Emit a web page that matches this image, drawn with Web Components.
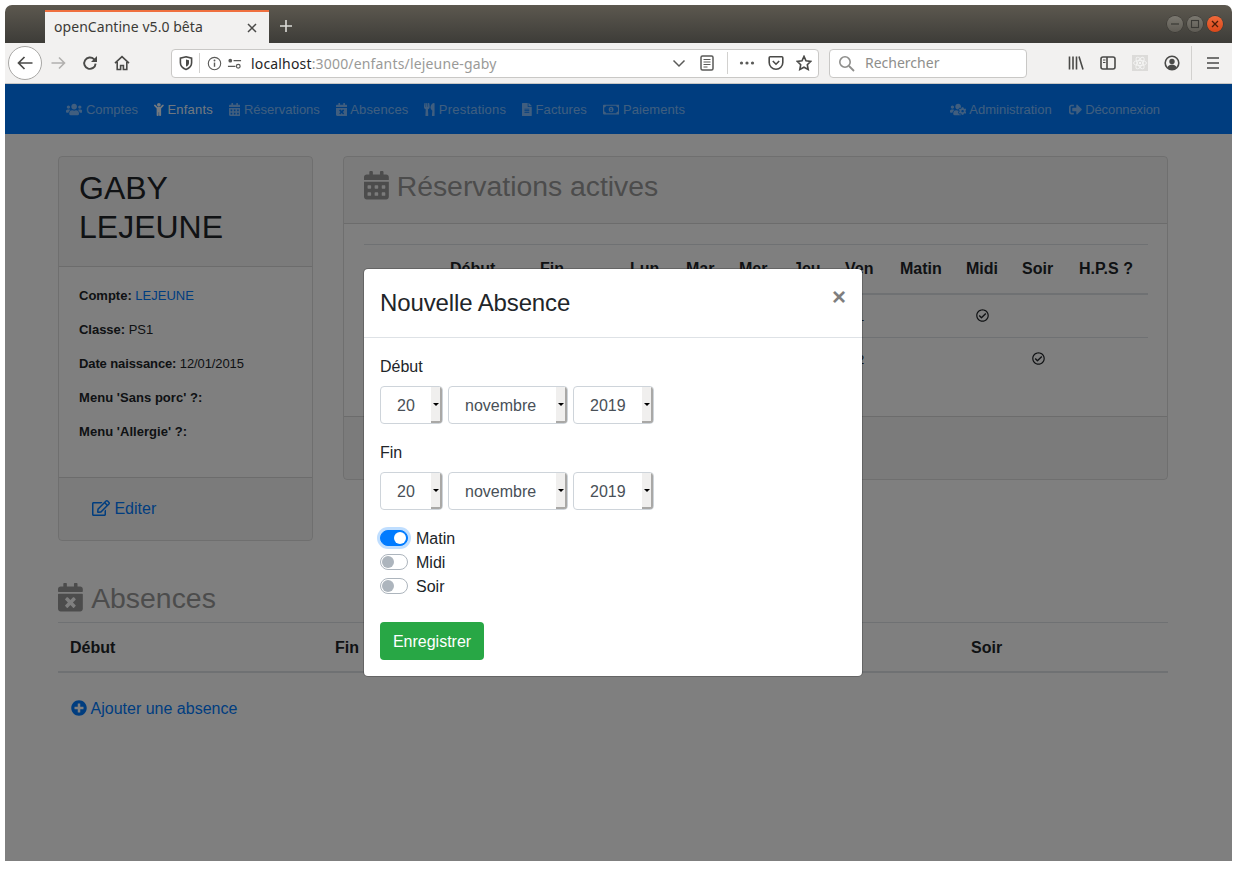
<!DOCTYPE html>
<html lang="fr">
<head>
<meta charset="utf-8">
<title>openCantine v5.0 bêta</title>
<style>
  html, body { margin: 0; background: #fff; }
  body { font-family: "Liberation Sans", Arial, sans-serif; font-size: 16px; color: #212529; }
</style>
</head>
<body>
<browser-window>
  <cantine-page></cantine-page>
</browser-window>

<script>
const ICONS = {
  users: [640, 'M96 224c35.3 0 64-28.7 64-64s-28.7-64-64-64-64 28.7-64 64 28.7 64 64 64zm448 0c35.3 0 64-28.7 64-64s-28.7-64-64-64-64 28.7-64 64 28.7 64 64 64zm32 32h-64c-17.6 0-33.5 7.1-45.1 18.6 40.3 22.1 68.9 62 75.1 109.4h66c17.7 0 32-14.3 32-32v-32c0-35.3-28.7-64-64-64zm-256 0c61.9 0 112-50.1 112-112S381.9 32 320 32 208 82.1 208 144s50.1 112 112 112zm76.8 32h-8.3c-20.8 10-43.9 16-68.5 16s-47.6-6-68.5-16h-8.3C179.6 288 128 339.6 128 403.2V432c0 26.5 21.5 48 48 48h288c26.5 0 48-21.5 48-48v-28.8c0-63.6-51.6-115.2-115.2-115.2zm-223.7-13.4C161.5 263.1 145.6 256 128 256H64c-35.3 0-64 28.7-64 64v32c0 17.7 14.3 32 32 32h65.9c6.3-47.4 34.9-87.3 75.2-109.4z'],
  child: [384, 'M120 72c0-39.765 32.235-72 72-72s72 32.235 72 72c0 39.764-32.235 72-72 72s-72-32.236-72-72zm254.627 1.373c-12.496-12.497-32.758-12.497-45.254 0L242.745 160H141.254L54.627 73.373c-12.496-12.497-32.758-12.497-45.254 0-12.497 12.497-12.497 32.758 0 45.255L104 213.254V480c0 17.673 14.327 32 32 32h16c17.673 0 32-14.327 32-32V368h16v112c0 17.673 14.327 32 32 32h16c17.673 0 32-14.327 32-32V213.254l94.627-94.627c12.497-12.497 12.497-32.757 0-45.254z'],
  calendar: [448, 'M0 464c0 26.5 21.5 48 48 48h352c26.5 0 48-21.5 48-48V192H0v272zm320-196c0-6.6 5.4-12 12-12h40c6.6 0 12 5.4 12 12v40c0 6.6-5.4 12-12 12h-40c-6.6 0-12-5.4-12-12v-40zm0 128c0-6.6 5.4-12 12-12h40c6.6 0 12 5.4 12 12v40c0 6.6-5.4 12-12 12h-40c-6.6 0-12-5.4-12-12v-40zM192 268c0-6.6 5.4-12 12-12h40c6.6 0 12 5.4 12 12v40c0 6.6-5.4 12-12 12h-40c-6.6 0-12-5.4-12-12v-40zm0 128c0-6.6 5.4-12 12-12h40c6.6 0 12 5.4 12 12v40c0 6.6-5.4 12-12 12h-40c-6.6 0-12-5.4-12-12v-40zM64 268c0-6.6 5.4-12 12-12h40c6.6 0 12 5.4 12 12v40c0 6.6-5.4 12-12 12H76c-6.6 0-12-5.4-12-12v-40zm0 128c0-6.6 5.4-12 12-12h40c6.6 0 12 5.4 12 12v40c0 6.6-5.4 12-12 12H76c-6.6 0-12-5.4-12-12v-40zM400 64h-48V16c0-8.8-7.2-16-16-16h-32c-8.8 0-16 7.2-16 16v48H160V16c0-8.8-7.2-16-16-16h-32c-8.8 0-16 7.2-16 16v48H48C21.5 64 0 85.5 0 112v48h448v-48c0-26.5-21.5-48-48-48z'],
  times: [448, 'M436 160H12c-6.6 0-12-5.4-12-12v-36c0-26.5 21.5-48 48-48h48V12c0-6.6 5.4-12 12-12h40c6.6 0 12 5.4 12 12v52h128V12c0-6.6 5.4-12 12-12h40c6.6 0 12 5.4 12 12v52h48c26.5 0 48 21.5 48 48v36c0 6.6-5.4 12-12 12zM12 192h424c6.6 0 12 5.4 12 12v260c0 26.5-21.5 48-48 48H48c-26.5 0-48-21.5-48-48V204c0-6.6 5.4-12 12-12zm257.3 160l48.1-48.1c4.7-4.7 4.7-12.3 0-17l-28.3-28.3c-4.7-4.7-12.3-4.7-17 0L224 306.7l-48.1-48.1c-4.7-4.7-12.3-4.7-17 0l-28.3 28.3c-4.7 4.7-4.7 12.3 0 17l48.1 48.1-48.1 48.1c-4.7 4.7-4.7 12.3 0 17l28.3 28.3c4.7 4.7 12.3 4.7 17 0l48.1-48.1 48.1 48.1c4.7 4.7 12.3 4.7 17 0l28.3-28.3c4.7-4.7 4.7-12.3 0-17L269.3 352z'],
  utensils: [416, 'M207.9 15.2c.8 4.7 16.1 94.5 16.1 128.8 0 52.3-27.8 89.6-68.9 104.6L168 486.7c.7 13.7-10.2 25.3-24 25.3H80c-13.7 0-24.7-11.5-24-25.3l12.9-238.1C27.7 233.6 0 196.2 0 144 0 109.6 15.3 19.9 16.1 15.2 19.3-5.1 61.4-5.4 64 16.3v141.2c1.3 3.4 15.1 3.2 16 0 1.4-25.3 7.9-139.2 8-141.8 3.3-20.8 44.7-20.8 47.9 0 .2 2.7 6.6 116.5 8 141.8.9 3.2 14.8 3.4 16 0V16.3c2.6-21.6 44.8-21.4 48-1.1zm119.2 285.7l-15 185.1c-1.2 14 9.9 26 23.9 26h56c13.3 0 24-10.7 24-24V24c0-13.2-10.7-24-24-24-82.5 0-221.4 178.5-64.9 300.9z'],
  file: [384, 'M224 136V0H24C10.7 0 0 10.7 0 24v464c0 13.3 10.7 24 24 24h336c13.3 0 24-10.7 24-24V160H248c-13.2 0-24-10.8-24-24zm64 236c0 6.6-5.4 12-12 12H108c-6.6 0-12-5.4-12-12v-8c0-6.6 5.4-12 12-12h168c6.6 0 12 5.4 12 12v8zm0-64c0 6.6-5.4 12-12 12H108c-6.6 0-12-5.4-12-12v-8c0-6.6 5.4-12 12-12h168c6.6 0 12 5.4 12 12v8zm0-72v8c0 6.6-5.4 12-12 12H108c-6.6 0-12-5.4-12-12v-8c0-6.6 5.4-12 12-12h168c6.6 0 12 5.4 12 12zm96-114.1v6.1H256V0h6.1c6.4 0 12.5 2.5 17 7l97.9 98c4.5 4.5 7 10.6 7 16.9z'],
  money: [640, 'M320 144c-53.02 0-96 50.14-96 112 0 61.85 42.98 112 96 112 53 0 96-50.13 96-112 0-61.86-42.98-112-96-112zm40 168c0 4.42-3.58 8-8 8h-64c-4.42 0-8-3.58-8-8v-16c0-4.42 3.58-8 8-8h16v-55.44l-.47.31a7.992 7.992 0 0 1-11.09-2.22l-8.88-13.31a7.992 7.992 0 0 1 2.22-11.09l15.33-10.22a23.99 23.99 0 0 1 13.31-4.03H328c4.42 0 8 3.58 8 8v88h16c4.42 0 8 3.58 8 8v16zM608 64H32C14.33 64 0 78.33 0 96v320c0 17.67 14.33 32 32 32h576c17.67 0 32-14.33 32-32V96c0-17.67-14.33-32-32-32zm-16 272c-35.35 0-64 28.65-64 64H112c0-35.35-28.65-64-64-64V176c35.35 0 64-28.65 64-64h416c0 35.35 28.65 64 64 64v160z'],
  userscog: [640, 'M610.5 341.3c2.6-14.1 2.6-28.5 0-42.6l25.8-14.9c3-1.7 4.3-5.2 3.3-8.5-6.7-21.6-18.2-41.2-33.2-57.4-2.3-2.5-6-3.1-9-1.4l-25.8 14.9c-10.9-9.3-23.4-16.5-36.9-21.3v-29.8c0-3.4-2.4-6.4-5.7-7.1-22.3-5-45-4.8-66.2 0-3.3.7-5.7 3.7-5.7 7.1v29.8c-13.5 4.8-26 12-36.9 21.3l-25.8-14.9c-2.9-1.7-6.7-1.1-9 1.4-15 16.2-26.5 35.8-33.2 57.4-1 3.3.4 6.8 3.3 8.5l25.8 14.9c-2.6 14.1-2.6 28.5 0 42.6l-25.8 14.9c-3 1.7-4.3 5.2-3.3 8.5 6.7 21.6 18.2 41.1 33.2 57.4 2.3 2.5 6 3.1 9 1.4l25.8-14.9c10.9 9.3 23.4 16.5 36.9 21.3v29.8c0 3.4 2.4 6.4 5.7 7.1 22.3 5 45 4.8 66.2 0 3.3-.7 5.7-3.7 5.7-7.1v-29.8c13.5-4.8 26-12 36.9-21.3l25.8 14.9c2.9 1.7 6.7 1.1 9-1.4 15-16.2 26.5-35.8 33.2-57.4 1-3.3-.4-6.8-3.3-8.5l-25.8-14.9zM496 368.5c-26.8 0-48.5-21.8-48.5-48.5s21.8-48.5 48.5-48.5 48.5 21.8 48.5 48.5-21.7 48.5-48.5 48.5zM96 224c35.3 0 64-28.7 64-64s-28.7-64-64-64-64 28.7-64 64 28.7 64 64 64zm224 32c1.9 0 3.7-.5 5.6-.6 8.3-21.7 20.5-42.1 36.3-59.2 7.4-8 17.9-12.6 28.9-12.6 6.9 0 13.7 1.8 19.6 5.3l7.9 4.6c.8-.5 1.6-.9 2.4-1.4 7-14.6 11.2-30.8 11.2-48 0-61.9-50.1-112-112-112S208 82.1 208 144c0 61.9 50.1 112 112 112zm105.2 194.5c-2.3-1.2-4.6-2.6-6.8-3.9-8.2 4.8-15.3 9.8-27.5 9.8-10.9 0-21.4-4.6-28.9-12.6-18.3-19.8-32.3-43.9-40.2-69.6-10.7-34.5 24.9-49.7 25.8-50.3-.1-2.6-.1-5.2 0-7.8l-7.9-4.6c-3.8-2.2-7-5-9.8-8.1-3.3.2-6.5.6-9.8.6-24.6 0-47.6-6-68.5-16h-8.3C179.6 288 128 339.6 128 403.2V432c0 26.5 21.5 48 48 48h255.4c-3.7-6-6.2-12.8-6.2-20.3v-9.2zM173.1 274.6C161.5 263.1 145.6 256 128 256H64c-35.3 0-64 28.7-64 64v32c0 17.7 14.3 32 32 32h65.9c6.3-47.4 34.9-87.3 75.2-109.4z'],
  signout: [512, 'M497 273L329 441c-15 15-41 4.5-41-17v-96H152c-13.3 0-24-10.7-24-24v-96c0-13.3 10.7-24 24-24h136V88c0-21.4 25.9-32 41-17l168 168c9.3 9.4 9.3 24.6 0 34zM192 436v-40c0-6.6-5.4-12-12-12H96c-17.7 0-32-14.3-32-32V160c0-17.7 14.3-32 32-32h84c6.6 0 12-5.4 12-12V76c0-6.6-5.4-12-12-12H96c-53 0-96 43-96 96v192c0 53 43 96 96 96h84c6.6 0 12-5.4 12-12z'],
  edit: [576, 'M402.3 344.9l32-32c5-5 13.7-1.5 13.7 5.7V464c0 26.5-21.5 48-48 48H48c-26.5 0-48-21.5-48-48V112c0-26.5 21.5-48 48-48h273.5c7.1 0 10.7 8.6 5.7 13.7l-32 32c-1.5 1.5-3.5 2.3-5.7 2.3H48v352h352V350.5c0-2.1.8-4.1 2.3-5.6zm156.6-201.8L296.3 405.7l-90.4 10c-26.2 2.9-48.5-19.2-45.6-45.6l10-90.4L432.9 17.1c22.9-22.9 59.9-22.9 82.7 0l43.2 43.2c22.9 22.9 22.9 60 .1 82.8zM460.1 174L402 115.9 216.2 301.8l-7.3 65.3 65.3-7.3L460.1 174zm64.8-79.7l-43.2-43.2c-4.1-4.1-10.8-4.1-14.8 0L436 82l58.1 58.1 30.9-30.9c4-4.2 4-10.8-.1-14.9z'],
  plus: [512, 'M256 8C119 8 8 119 8 256s111 248 248 248 248-111 248-248S393 8 256 8zm144 276c0 6.6-5.4 12-12 12h-92v92c0 6.6-5.4 12-12 12h-56c-6.6 0-12-5.4-12-12v-92h-92c-6.6 0-12-5.4-12-12v-56c0-6.6 5.4-12 12-12h92v-92c0-6.6 5.4-12 12-12h56c6.6 0 12 5.4 12 12v92h92c6.6 0 12 5.4 12 12v56z'],
  check: [512, 'M256 8C119.033 8 8 119.033 8 256s111.033 248 248 248 248-111.033 248-248S392.967 8 256 8zm0 48c110.532 0 200 89.451 200 200 0 110.532-89.451 200-200 200-110.532 0-200-89.451-200-200 0-110.532 89.451-200 200-200m140.204 130.267l-22.536-22.718c-4.667-4.705-12.265-4.736-16.97-.068L215.346 303.697l-59.792-60.277c-4.667-4.705-12.265-4.736-16.97-.069l-22.719 22.536c-4.705 4.667-4.736 12.265-.068 16.971l90.781 91.516c4.667 4.705 12.265 4.736 16.97.068l172.589-171.204c4.704-4.668 4.734-12.266.067-16.971z']
};

class FaIcon extends HTMLElement {
  connectedCallback() {
    const [w, d] = ICONS[this.getAttribute('name')];
    this.attachShadow({ mode: 'open' }).innerHTML = `
      <style>
        :host { display: inline-block; height: 1em; line-height: 0; vertical-align: -.125em; }
        svg { height: 1em; width: auto; display: block; fill: currentColor; }
      </style>
      <svg viewBox="0 0 ${w} 512"><path d="${d}"/></svg>`;
  }
}
customElements.define('fa-icon', FaIcon);

// browser chrome around the page
class BrowserWindow extends HTMLElement {
  constructor() {
    super();
    const stroke = 'fill="none" stroke="#4a4a48" stroke-width="1.6"';
    this.attachShadow({ mode: 'open' }).innerHTML = `
      <style>
        :host { display: flex; flex-direction: column; width: 1227px; height: 856px; margin: 5px 0 0 5px; font-family: "Noto Sans", sans-serif; }
        .titlebar { height: 38px; flex: none; display: flex; align-items: flex-end; padding-left: 40px; background: linear-gradient(#5c584f, #3d3c38); border-radius: 7px 7px 0 0; }
        .tab { width: 224px; height: 31px; box-sizing: content-box; border-top: 2px solid #f0703f; background: #f2f1f0; display: flex; align-items: center; color: #3c3b37; font-size: 14px; }
        .tab span { margin-left: 9px; margin-top: -2px; flex: 1; letter-spacing: .05px; }
        .tab svg { margin-right: 11px; }
        .plus { align-self: center; margin-left: 9px; margin-top: 4px; display: block; }
        .winbtns { margin-left: auto; margin-right: 9px; align-self: center; display: flex; gap: 4px; }
        .winbtns i { width: 16px; height: 16px; border-radius: 50%; display: flex; align-items: center; justify-content: center; background: linear-gradient(#7b7870, #5e5b54); box-shadow: 0 0 0 .5px #34332f; }
        .winbtns i.close { background: linear-gradient(#f0693a, #d9481a); }
        .toolbar { height: 40px; flex: none; display: flex; align-items: center; background: #f2f1f0; border-bottom: 1px solid #c8c7c5; }
        .back { box-sizing: border-box; width: 34px; height: 34px; margin-left: 3px; border: 1px solid #a8a7a5; border-radius: 50%; background: #fff; display: flex; align-items: center; justify-content: center; flex: none; }
        .ic { flex: none; display: block; }
        .url { width: 646px; height: 27px; margin-left: 41px; flex: none; border: 1px solid #c9c8c6; border-radius: 4px; background: #fff; display: flex; align-items: center; font-size: 14px; color: #9a9a98; }
        .url b { font-weight: 400; color: #252525; }
        .sep { width: 1px; height: 20px; background: #d2d1cf; flex: none; }
        .addr { flex: none; width: 421px; margin-left: 9px; white-space: nowrap; letter-spacing: .17px; }
        .search { width: 196px; height: 27px; margin-left: 10px; flex: none; border: 1px solid #c9c8c6; border-radius: 4px; background: #fff; display: flex; align-items: center; font-size: 14px; color: #8e8e8c; }
        .search span { margin-left: 10px; margin-top: -2px; }
        .content { flex: 1; position: relative; overflow: hidden; background: #fff; }
      </style>
      <div class="titlebar">
        <div class="tab"><span>openCantine v5.0 bêta</span>
          <svg class="ic" width="12" height="12" viewBox="0 0 12 12"><path d="M2 2l8 8M10 2l-8 8" stroke="#4a4a48" stroke-width="1.5" fill="none"/></svg>
        </div>
        <svg class="plus" width="16" height="16" viewBox="0 0 16 16"><path d="M8 2v12M2 8h12" stroke="#dcdbd7" stroke-width="1.6"/></svg>
        <div class="winbtns">
          <i><svg width="10" height="10" viewBox="0 0 10 10"><path d="M1 5h8" stroke="#3a3935" stroke-width="1.2"/></svg></i>
          <i><svg width="10" height="10" viewBox="0 0 10 10"><rect x="1.5" y="1.5" width="7" height="7" fill="none" stroke="#3a3935" stroke-width="1.1"/></svg></i>
          <i class="close"><svg width="10" height="10" viewBox="0 0 10 10"><path d="M2 2l6 6M8 2l-6 6" stroke="#4a1c08" stroke-width="1.3"/></svg></i>
        </div>
      </div>
      <div class="toolbar">
        <div class="back"><svg width="18" height="18" viewBox="0 0 18 18"><path d="M16.5 9H2.5M8.5 3L2.5 9l6 6" fill="none" stroke="#4a4a48" stroke-width="1.7"/></svg></div>
        <svg class="ic" style="margin-left:8px" width="16" height="16" viewBox="0 0 16 16"><path d="M14.5 8H1.5M9 2.5L14.5 8 9 13.5" fill="none" stroke="#b1b0ae" stroke-width="1.6"/></svg>
        <svg class="ic" style="margin-left:16px" width="16" height="16" viewBox="0 0 16 16"><path d="M13.6 8.6A5.7 5.7 0 1 1 12 4.200L14 6" fill="none" stroke="#4a4a48" stroke-width="1.900"/><path d="M15 1v6H9z" fill="#4a4a48"/></svg>
        <svg class="ic" style="margin-left:16px" width="16" height="16" viewBox="0 0 16 16"><path d="M1 8.2L8 1.6l7 6.6M3.2 7v7.5h3.4v-4h2.8v4h3.4V7" ${stroke}/></svg>
        <div class="url">
          <svg class="ic" style="margin-left:6px" width="16" height="16" viewBox="0 0 16 16"><path d="M8 1.800l5.600 1.400v4.600c0 3.400-2.600 5.600-5.600 6.600-3-1-5.600-3.200-5.600-6.600V3.200z" ${stroke}/><path d="M8 4.500l3 .8v2.600C11 9.800 9.600 11 8 11.600z" fill="#4a4a48"/></svg>
          <span class="sep" style="margin-left:5px"></span>
          <svg class="ic" style="margin-left:7px" width="15" height="15" viewBox="0 0 16 16"><circle cx="8" cy="8" r="6.600" fill="none" stroke="#5a5a58" stroke-width="1.200"/><path d="M8 7v4.500" stroke="#5a5a58" stroke-width="1.500"/><circle cx="8" cy="4.800" r="1" fill="#5a5a58"/></svg>
          <svg class="ic" style="margin-left:5px" width="15" height="15" viewBox="0 0 16 16"><path d="M7 5h8M1 11h8" stroke="#5a5a58" stroke-width="1.400"/><circle cx="3.500" cy="5" r="2" fill="#5a5a58"/><circle cx="12" cy="11" r="2" fill="none" stroke="#5a5a58" stroke-width="1.300"/></svg>
          <span class="addr"><b>localhost</b>:3000/enfants/lejeune-gaby</span>
          <svg class="ic" width="14" height="14" viewBox="0 0 14 14"><path d="M1.500 4.500L7 10l5.500-5.500" fill="none" stroke="#5a5a58" stroke-width="1.500"/></svg>
          <svg class="ic" style="margin-left:14px" width="14" height="16" viewBox="0 0 14 16"><rect x="1" y="1" width="12" height="14" rx="1.500" fill="none" stroke="#5a5a58" stroke-width="1.500"/><path d="M3.500 4.500h7M3.500 7h7M3.500 9.500h7M3.500 12h4" stroke="#5a5a58"/></svg>
          <span class="sep" style="margin-left:13px;height:22px"></span>
          <svg class="ic" style="margin-left:11px" width="16" height="16" viewBox="0 0 16 16"><circle cx="2.500" cy="8" r="1.600" fill="#5a5a58"/><circle cx="8" cy="8" r="1.600" fill="#5a5a58"/><circle cx="13.500" cy="8" r="1.600" fill="#5a5a58"/></svg>
          <svg class="ic" style="margin-left:13px" width="16" height="16" viewBox="0 0 16 16"><path d="M2.200 1.800h11.600c.6 0 1 .4 1 1v4.600c0 3.800-3 6.800-6.800 6.800s-6.800-3-6.800-6.800V2.800c0-.6.400-1 1-1z" ${stroke}/><path d="M4.800 6L8 9.200 11.200 6" ${stroke}/></svg>
          <svg class="ic" style="margin-left:12px" width="16" height="16" viewBox="0 0 16 16"><path d="M8 1.400l2 4.400 4.800.6-3.500 3.300.9 4.800L8 12.200l-4.200 2.300.9-4.800L1.200 6.400 6 5.800z" ${stroke}/></svg>
        </div>
        <div class="search">
          <svg class="ic" style="margin-left:8px" width="17" height="17" viewBox="0 0 17 17"><circle cx="7" cy="7" r="5.200" fill="none" stroke="#8e8e8c" stroke-width="1.600"/><path d="M11 11l5 5" stroke="#8e8e8c" stroke-width="1.800"/></svg>
          <span>Rechercher</span>
        </div>
        <svg class="ic" style="margin-left:41px" width="16" height="16" viewBox="0 0 16 16"><path d="M1.500 1.500v13M5 1.500v13M8.500 1.500v13M11 1.500l4 13" ${stroke}/></svg>
        <svg class="ic" style="margin-left:16px" width="16" height="16" viewBox="0 0 16 16"><rect x="1" y="2" width="14" height="12" rx="2" ${stroke}/><path d="M7 2v12" ${stroke}/><path d="M3 5h2.500M3 7.500h2.500" stroke="#4a4a48"/></svg>
        <svg class="ic" style="margin-left:16px;background:#dcdbd9" width="16" height="16" viewBox="0 0 16 16"><g fill="none" stroke="#f5f5f4" stroke-width=".9"><ellipse cx="8" cy="8" rx="6.500" ry="2.600"/><ellipse cx="8" cy="8" rx="6.500" ry="2.600" transform="rotate(60 8 8)"/><ellipse cx="8" cy="8" rx="6.500" ry="2.600" transform="rotate(120 8 8)"/></g><circle cx="8" cy="8" r="1.200" fill="#f5f5f4"/></svg>
        <svg class="ic" style="margin-left:16px" width="16" height="16" viewBox="0 0 16 16"><circle cx="8" cy="8" r="6.800" ${stroke}/><circle cx="8" cy="6.400" r="2.700" fill="#4a4a48"/><path d="M3.400 12.400c1-2 2.700-2.800 4.600-2.800s3.600.8 4.600 2.800c-1.200 1.200-2.800 1.900-4.600 1.900s-3.400-.7-4.600-1.900z" fill="#4a4a48"/></svg>
        <span class="sep" style="margin-left:11px;height:34px"></span>
        <svg class="ic" style="margin-left:13px" width="16" height="16" viewBox="0 0 16 16"><path d="M2 3h12M2 8h12M2 13h12" stroke="#4a4a48" stroke-width="1.700"/></svg>
      </div>
      <div class="content"><slot></slot></div>`;
  }
}
customElements.define('browser-window', BrowserWindow);

class NavItem extends HTMLElement {
  connectedCallback() {
    const active = this.hasAttribute('active');
    this.attachShadow({ mode: 'open' }).innerHTML = `
      <style>
        :host { display: block; padding: 2px 8px 0; font-size: 13px; white-space: nowrap; color: ${active ? 'rgba(255,255,255,.9)' : 'rgba(255,255,255,.5)'}; }
      </style>
      <fa-icon name="${this.getAttribute('icon')}"></fa-icon> <slot></slot>`;
  }
}
customElements.define('nav-item', NavItem);

class AppNavbar extends HTMLElement {
  constructor() {
    super();
    this.attachShadow({ mode: 'open' }).innerHTML = `
      <style>
        :host { display: flex; align-items: center; height: 50px; padding: 0 64px 0 53px; background: #007bff; }
        .right { margin-left: auto; display: flex; }
        .left { display: flex; }
      </style>
      <div class="left">
        <nav-item icon="users">Comptes</nav-item>
        <nav-item icon="child" active style="letter-spacing:.2px">Enfants</nav-item>
        <nav-item icon="calendar">Réservations</nav-item>
        <nav-item icon="times" style="letter-spacing:.14px">Absences</nav-item>
        <nav-item icon="utensils" style="letter-spacing:.2px">Prestations</nav-item>
        <nav-item icon="file" style="letter-spacing:.1px">Factures</nav-item>
        <nav-item icon="money" style="letter-spacing:.08px">Paiements</nav-item>
      </div>
      <div class="right">
        <nav-item icon="userscog">Administration</nav-item>
        <nav-item icon="signout" style="letter-spacing:-.1px;padding-left:9px">Déconnexion</nav-item>
      </div>`;
  }
}
customElements.define('app-navbar', AppNavbar);

class AppCard extends HTMLElement {
  constructor() {
    super();
    this.attachShadow({ mode: 'open' }).innerHTML = `
      <style>
        :host { display: block; box-sizing: border-box; border: 1px solid rgba(0,0,0,.125); border-radius: 4px; }
        .head { background: rgba(0,0,0,.03); border-bottom: 1px solid rgba(0,0,0,.125); border-radius: 3px 3px 0 0; }
        .body { padding: 20px; }
        .foot { background: rgba(0,0,0,.03); border-top: 1px solid rgba(0,0,0,.125); padding: 12px 20px; min-height: 38px; border-radius: 0 0 3px 3px; }
      </style>
      <div class="head"><slot name="head"></slot></div>
      <div class="body"><slot></slot></div>
      <div class="foot"><slot name="foot"></slot></div>`;
  }
}
customElements.define('app-card', AppCard);

class TextLink extends HTMLElement {
  connectedCallback() {
    const icon = this.getAttribute('icon');
    this.attachShadow({ mode: 'open' }).innerHTML = `
      <style>
        :host { display: inline-block; color: #007bff; }
        :host([btn]) { padding: 6px 12px; line-height: 24px; border: 1px solid transparent; vertical-align: top; }
      </style>
      ${icon ? `<fa-icon name="${icon}"></fa-icon>` : ''}<slot></slot>`;
  }
}
customElements.define('text-link', TextLink);

class DataTable extends HTMLElement {
  connectedCallback() {
    const cols = JSON.parse(this.getAttribute('cols'));
    const rows = JSON.parse(this.getAttribute('rows') || '[]');
    const cell = v => v === 'check' ? '<fa-icon name="check"></fa-icon>' : v;
    this.attachShadow({ mode: 'open' }).innerHTML = `
      <style>
        :host { display: block; }
        table { border-collapse: separate; border-spacing: 0; table-layout: fixed; width: 100%; }
        th { text-align: left; padding: 12px; line-height: 24px; font-size: 16px; font-weight: 700; white-space: nowrap; border-top: 1px solid #dee2e6; border-bottom: 2px solid #dee2e6; }
        :host([low]) th { padding-top: 13px; padding-bottom: 11px; }
        td { text-align: center; padding: 13px 12px 11px; line-height: 18px; height: 18px; font-size: 13px; }
        tr + tr td { border-top: 1px solid #dee2e6; }
      </style>
      <table>
        <colgroup>${cols.map(c => `<col style="width:${c[1]}px">`).join('')}</colgroup>
        <thead><tr>${cols.map(c => `<th>${c[0]}</th>`).join('')}</tr></thead>
        <tbody>${rows.map(r => `<tr>${r.map(v => `<td>${cell(v)}</td>`).join('')}</tr>`).join('')}</tbody>
      </table>`;
  }
}
customElements.define('data-table', DataTable);

class DateSelect extends HTMLElement {
  connectedCallback() {
    this.attachShadow({ mode: 'open' }).innerHTML = `
      <style>
        :host { display: flex; box-sizing: border-box; width: ${this.getAttribute('w')}px; height: 38px; border: 1px solid #ced4da; border-radius: 4px; overflow: hidden; background: #fff; color: #495057; line-height: 38px; }
        span { flex: 1; padding-left: 16px; }
        i { flex: none; box-sizing: border-box; width: 11px; background: #f0efee; border-right: 2px solid #a9a8a6; border-bottom: 2px solid #a9a8a6; display: flex; align-items: center; justify-content: center; }
        i::after { content: ""; border: 3px solid transparent; border-top-color: #000; border-bottom: 0; margin-top: 1px; }
      </style>
      <span><slot></slot></span><i></i>`;
  }
}
customElements.define('date-select', DateSelect);

class ToggleSwitch extends HTMLElement {
  connectedCallback() {
    this.attachShadow({ mode: 'open' }).innerHTML = `
      <style>
        :host { display: flex; align-items: center; gap: 8px; height: 24px; color: #212529; }
        .track { box-sizing: border-box; width: 28px; height: 16px; border: 1px solid #adb5bd; border-radius: 8px; background: #fff; display: flex; align-items: center; padding: 0 1px; }
        .track::after { content: ""; width: 12px; height: 12px; border-radius: 50%; background: #adb5bd; }
        :host([on]) .track { background: #007bff; border-color: #007bff; justify-content: flex-end; box-shadow: 0 0 0 3px rgba(0,123,255,.25); }
        :host([on]) .track::after { background: #fff; }
        span { padding-top: 2px; }
      </style>
      <div class="track"></div><span><slot></slot></span>`;
  }
}
customElements.define('toggle-switch', ToggleSwitch);

class AbsenceModal extends HTMLElement {
  constructor() {
    super();
    const dates = `
      <date-select w="63">20</date-select>
      <date-select w="120">novembre</date-select>
      <date-select w="81">2019</date-select>`;
    this.attachShadow({ mode: 'open' }).innerHTML = `
      <style>
        :host { position: absolute; inset: 0; background: rgba(0,0,0,.5); box-sizing: border-box; padding-right: 11px; display: flex; align-items: center; justify-content: center; }
        .dialog { width: 500px; box-sizing: border-box; background: #fff; background-clip: padding-box; border: 1px solid rgba(0,0,0,.2); border-radius: 5px; }
        .head { display: flex; align-items: flex-start; padding: 16px; border-bottom: 1px solid #dee2e6; }
        h5 { margin: 0; font-size: 24px; font-weight: 400; line-height: 36px; flex: 1; letter-spacing: -.12px; }
        .close { font-size: 24px; font-weight: 700; line-height: 24px; color: #000; opacity: .5; padding: 16px; margin: -16px; }
        .body { padding: 16px; }
        label { display: block; line-height: 24px; padding-top: 1px; margin-bottom: 7px; }
        .dates { display: flex; gap: 5px; margin-bottom: 16px; }
        .switches { margin-bottom: 24px; }
        .save { display: block; width: 104px; box-sizing: border-box; height: 38px; line-height: 40px; text-align: center; background: #28a745; color: #fff; border-radius: 4px; }
      </style>
      <div class="dialog">
        <div class="head"><h5>Nouvelle Absence</h5><span class="close">×</span></div>
        <div class="body">
          <label>Début</label>
          <div class="dates">${dates}</div>
          <label>Fin</label>
          <div class="dates">${dates}</div>
          <div class="switches">
            <toggle-switch on>Matin</toggle-switch>
            <toggle-switch>Midi</toggle-switch>
            <toggle-switch>Soir</toggle-switch>
          </div>
          <div class="save">Enregistrer</div>
        </div>
      </div>`;
  }
}
customElements.define('absence-modal', AbsenceModal);

class InfoLine extends HTMLElement {
  connectedCallback() {
    this.attachShadow({ mode: 'open' }).innerHTML = `
      <style>
        :host { display: block; font-size: 13px; line-height: 18px; margin-bottom: 16px; }
        b { font-weight: 700; }
      </style>
      <b>${this.getAttribute('label')}</b> <slot></slot>`;
  }
}
customElements.define('info-line', InfoLine);

class CantinePage extends HTMLElement {
  constructor() {
    super();
    const reservations = [['', 74], ['Début', 90], ['Fin', 90], ['Lun', 56], ['Mar', 53], ['Mer', 54], ['Jeu', 52], ['Ven', 55], ['Matin', 66], ['Midi', 56], ['Soir', 57], ['H.P.S ?', 81]];
    const rows = [
      ['', '', '', '', '', '', '', '1', '', 'check', '', ''],
      ['', '', '', '', '', '', '', '2', '', '', 'check', '']
    ];
    const absences = [['Début', 265], ['Fin', 212], ['Matin', 212], ['Midi', 212], ['Soir', 209]];
    this.attachShadow({ mode: 'open' }).innerHTML = `
      <style>
        :host { display: block; height: 100%; font-family: "Liberation Sans", Arial, sans-serif; font-size: 16px; line-height: 24px; color: #212529; }
        main { padding: 22px 64px 0 53px; }
        .row { display: flex; gap: 30px; align-items: flex-start; }
        .side { width: 255px; flex: none; }
        .wide { flex: 1; min-width: 0; }
        h2 { margin: 0; padding: 12px 20px 19px; font-size: 32px; font-weight: 400; line-height: 39px; color: #212529; }
        h3 { margin: 0; font-size: 28.4px; font-weight: 400; line-height: 33.6px; color: #999; }
        .card-title { padding: 13px 20px 19px; letter-spacing: -.02px; }
        section { margin-top: 41px; }
        section h3 { margin-bottom: 7px; line-height: 33px; word-spacing: 2px; }
        .add { margin-top: 16px; }
        .add text-link { padding-top: 7px; padding-bottom: 5px; }
        .tmargin { margin-bottom: 16px; }
      </style>
      <app-navbar></app-navbar>
      <main>
        <div class="row">
          <app-card class="side">
            <h2 slot="head">GABY LEJEUNE</h2>
            <info-line label="Compte:"><text-link>LEJEUNE</text-link></info-line>
            <info-line label="Classe:" style="letter-spacing:-.03px">PS1</info-line>
            <info-line label="Date naissance:" style="letter-spacing:-.11px">12/01/2015</info-line>
            <info-line label="Menu 'Sans porc' ?:" style="letter-spacing:.05px"></info-line>
            <info-line label="Menu 'Allergie' ?:" style="letter-spacing:.05px"></info-line>
            <text-link slot="foot" btn icon="edit"> Editer</text-link>
          </app-card>
          <app-card class="wide">
            <h3 slot="head" class="card-title"><fa-icon name="calendar"></fa-icon> Réservations actives</h3>
            <data-table class="tmargin" cols='${JSON.stringify(reservations)}' rows='${JSON.stringify(rows)}'></data-table>
          </app-card>
        </div>
        <section>
          <h3><fa-icon name="times"></fa-icon> Absences</h3>
          <data-table low cols='${JSON.stringify(absences)}'></data-table>
          <div class="add"><text-link btn icon="plus"> Ajouter une absence</text-link></div>
        </section>
      </main>
      <absence-modal></absence-modal>`;
  }
}
customElements.define('cantine-page', CantinePage);
</script>
</body>
</html>
